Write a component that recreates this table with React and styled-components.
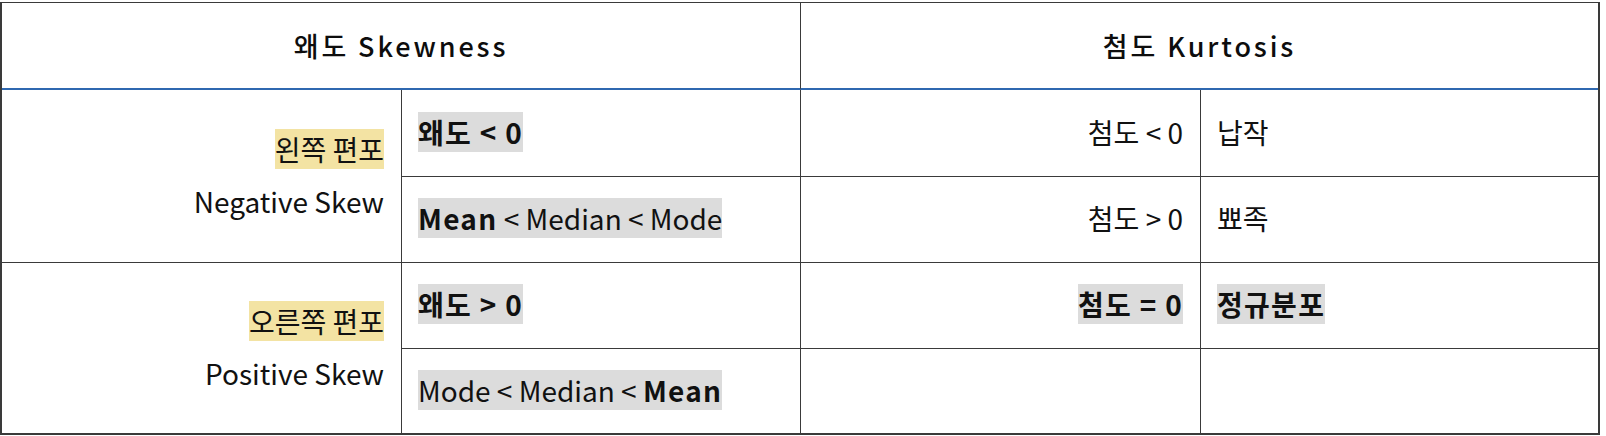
import React from "react";
import styled, { createGlobalStyle } from "styled-components";

const Global = createGlobalStyle`
  html, body { margin: 0; padding: 0; background: #ffffff; }
  body { font-family: "Noto Sans CJK KR", "Noto Sans", sans-serif; color: #111111; }
`;

const Page = styled.div`
  padding-top: 2px;
`;

const Table = styled.div`
  display: grid;
  grid-template-columns: 400px 399px 400px 397px;
  grid-template-rows: 87px 87px 86px 86px 84px;
  width: 1600px;
  box-sizing: border-box;
  border-top: 1px solid #3a3a3a;
  border-left: 2px solid #3a3a3a;
  border-right: 2px solid #3a3a3a;
  border-bottom: 2px solid #3a3a3a;
  font-size: 28px;
`;

const Cell = styled.div`
  box-sizing: border-box;
  display: flex;
  flex-direction: column;
  justify-content: center;
  align-items: ${(p) => (p.$align === "right" ? "flex-end" : "flex-start")};
  padding: 0 17px 3px 16px;
  border-right: ${(p) => (p.$last ? "none" : "1px solid #3a3a3a")};
  border-bottom: ${(p) => (p.$bottom ? "none" : "1px solid #3a3a3a")};
  grid-row: ${(p) => (p.$span ? `span ${p.$span}` : "auto")};
  white-space: nowrap;
`;

const HeadCell = styled.div`
  box-sizing: border-box;
  grid-column: span 2;
  display: flex;
  align-items: center;
  justify-content: center;
  border-right: ${(p) => (p.$last ? "none" : "1px solid #3a3a3a")};
  border-bottom: 2px solid #2f68b0;
  font-size: 27px;
  font-weight: 500;
  letter-spacing: 2.9px;
  color: #0d0d0d;
  white-space: nowrap;
`;

const Line = styled.div`
  line-height: 52px;
`;

const Mark = styled.span`
  background: ${(p) => (p.$tone === "yellow" ? "#f3e3a3" : "#dcdcdc")};
`;

const Strong = styled.span`
  font-weight: 700;
  letter-spacing: 1.3px;
`;

export default function App() {
  return (
    <>
      <Global />
      <Page>
        <Table>
          <HeadCell>왜도 Skewness</HeadCell>
          <HeadCell $last>첨도 Kurtosis</HeadCell>

          <Cell $align="right" $span={2}>
            <Line><Mark $tone="yellow">왼쪽 편포</Mark></Line>
            <Line>Negative Skew</Line>
          </Cell>
          <Cell>
            <Mark><Strong>왜도 &lt; 0</Strong></Mark>
          </Cell>
          <Cell $align="right">첨도 &lt; 0</Cell>
          <Cell $last>납작</Cell>

          <Cell>
            <Mark><Strong>Mean</Strong> &lt; Median &lt; Mode</Mark>
          </Cell>
          <Cell $align="right">첨도 &gt; 0</Cell>
          <Cell $last>뾰족</Cell>

          <Cell $align="right" $span={2} $bottom>
            <Line><Mark $tone="yellow">오른쪽 편포</Mark></Line>
            <Line>Positive Skew</Line>
          </Cell>
          <Cell>
            <Mark><Strong>왜도 &gt; 0</Strong></Mark>
          </Cell>
          <Cell $align="right">
            <Mark><Strong>첨도 = 0</Strong></Mark>
          </Cell>
          <Cell $last>
            <Mark><Strong>정규분포</Strong></Mark>
          </Cell>

          <Cell $bottom>
            <Mark>Mode &lt; Median &lt; <Strong>Mean</Strong></Mark>
          </Cell>
          <Cell $bottom></Cell>
          <Cell $last $bottom></Cell>
        </Table>
      </Page>
    </>
  );
}
